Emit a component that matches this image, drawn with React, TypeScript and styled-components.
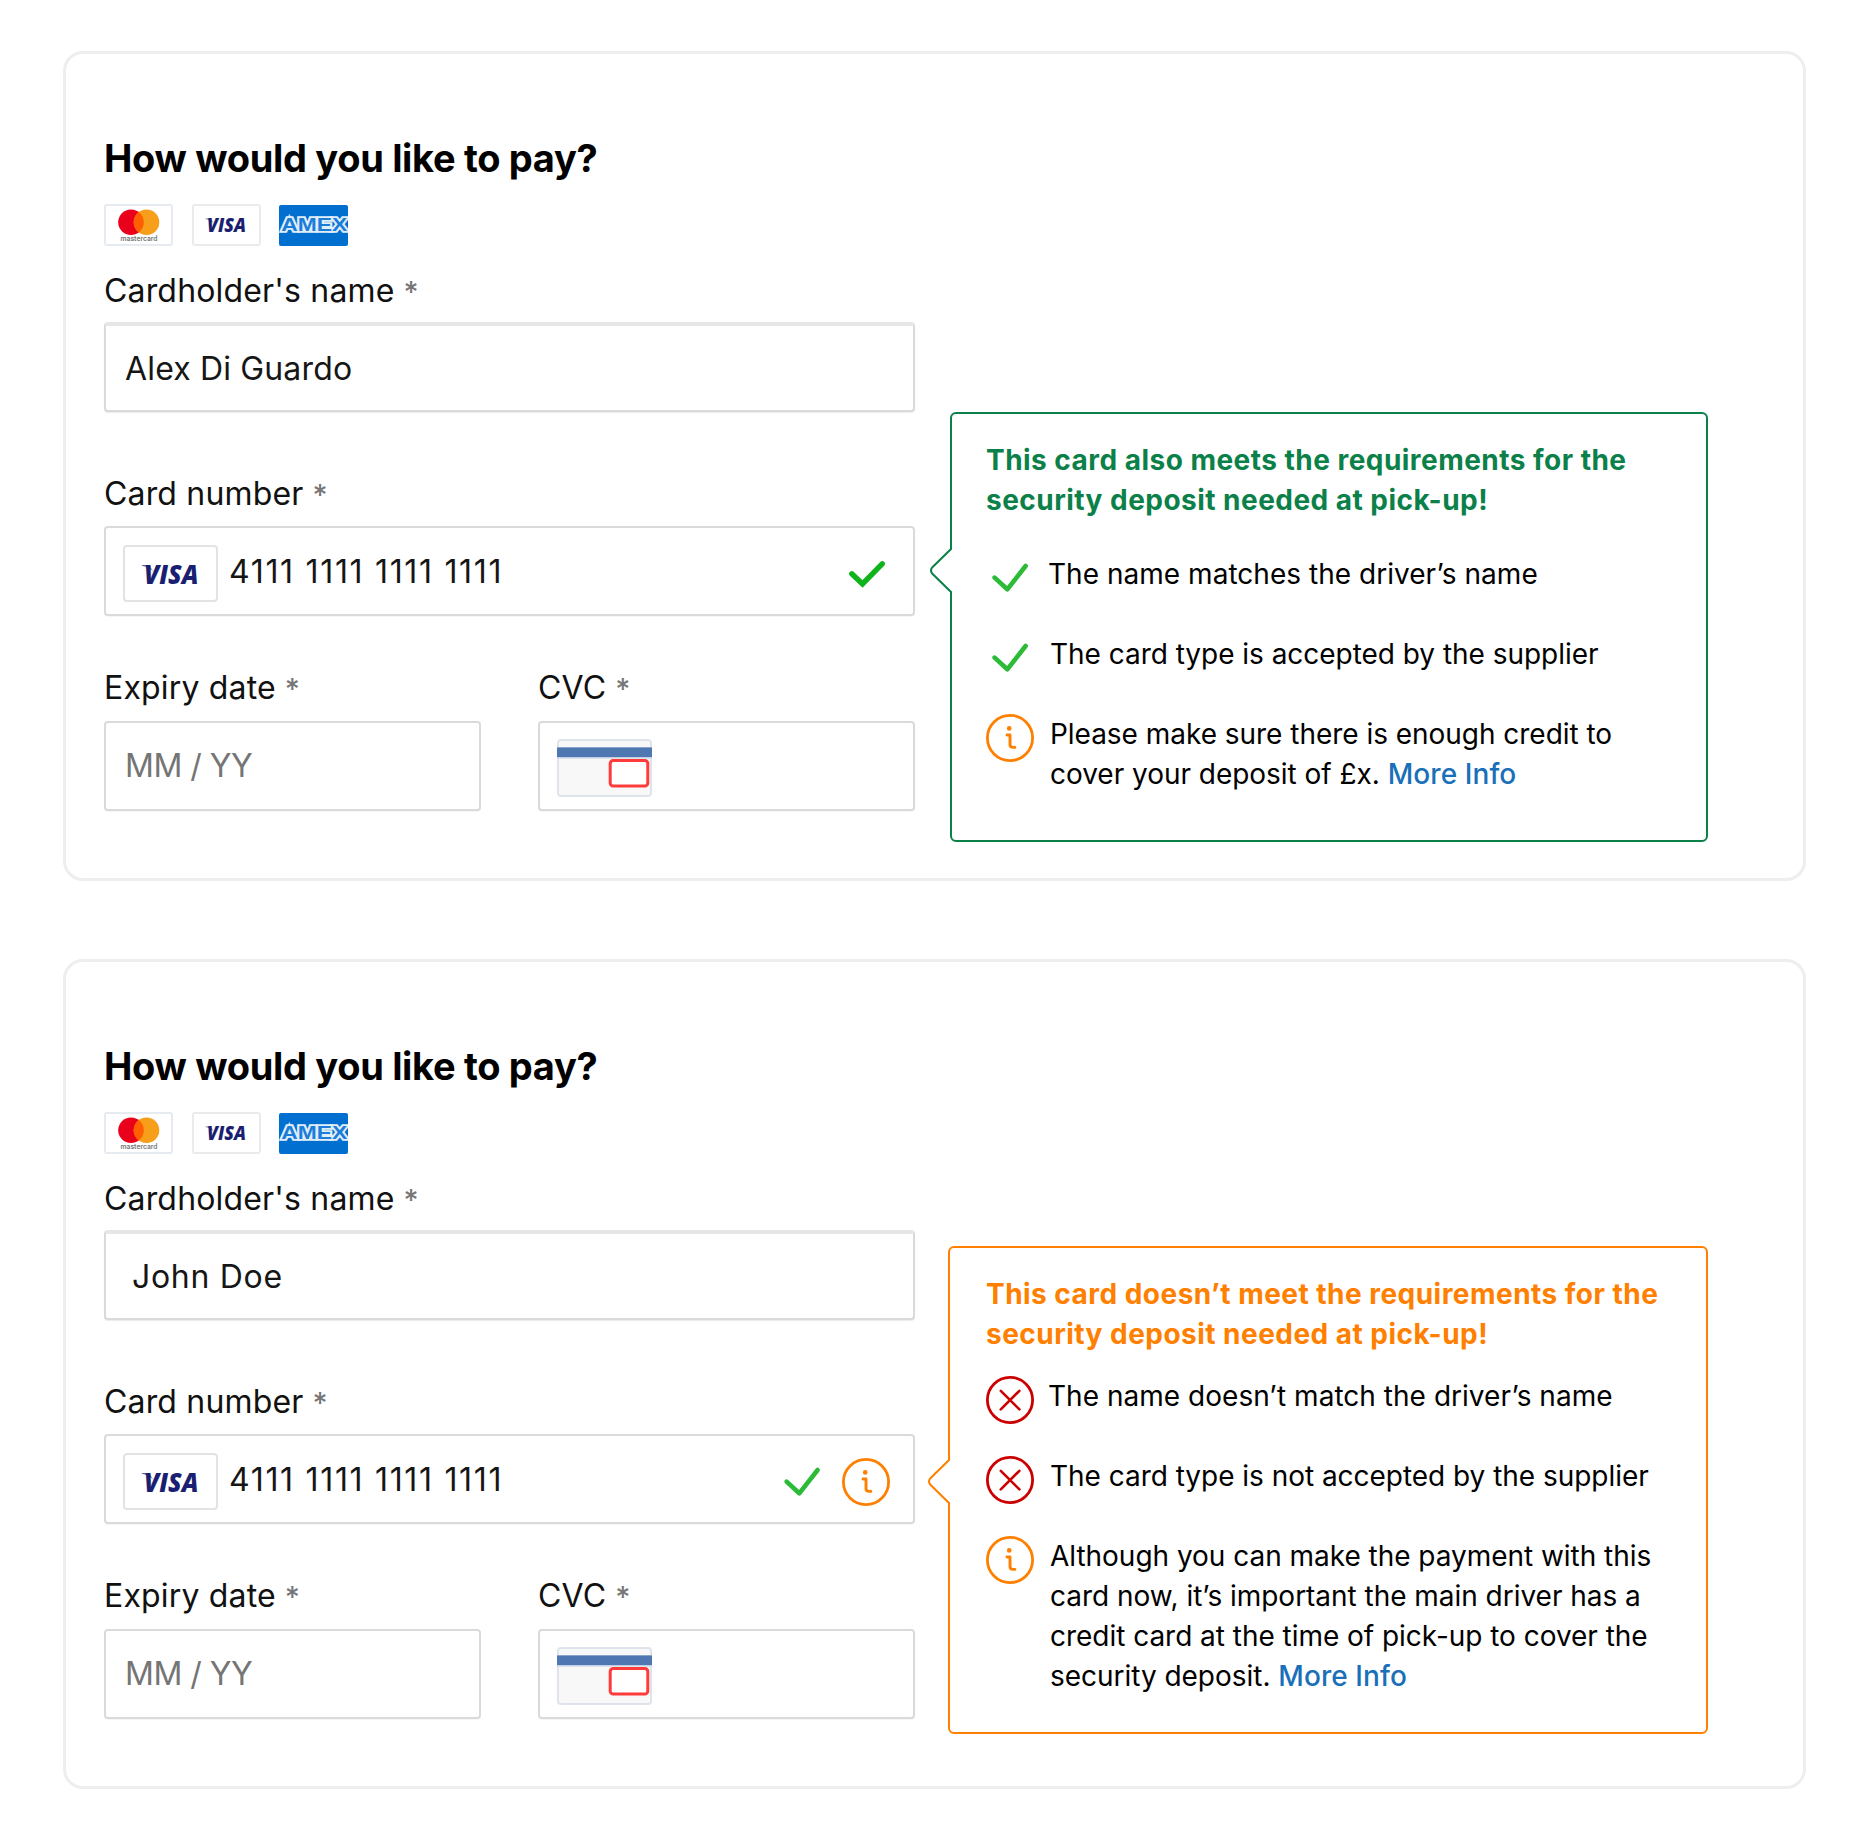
import React from "react";
import styled, { createGlobalStyle } from "styled-components";

const GREEN = "#0b8149";
const ORANGE = "#ff8000";
const RED = "#cc0000";

const GlobalStyle = createGlobalStyle`
  *, *::before, *::after { box-sizing: border-box; }
  body {
    margin: 0;
    background: #fff;
    color: #000;
    font-family: Inter, "Liberation Sans", sans-serif;
  }
`;

const Page = styled.main`
  display: flex;
  flex-direction: column;
  gap: 78px;
  padding: 51px 0 55px 63px;
`;

const Panel = styled.section`
  display: flex;
  align-items: flex-start;
  width: 1743px;
  height: 830px;
  padding-left: 38px;
  border: 3px solid #eeeeee;
  border-radius: 20px;
  background: #fff;
`;

const Form = styled.form`
  display: flex;
  flex-direction: column;
  width: 811px;
  padding-top: 81px;
`;

const Heading = styled.h2`
  margin: 0 0 23px;
  font-size: 38px;
  font-weight: 700;
  line-height: 46px;
  letter-spacing: -0.32px;
`;

const Brands = styled.div`
  display: flex;
  gap: 18.5px;
  height: 43px;
  margin-bottom: 24px;

  svg { display: block; width: 69px; height: 43px; }
`;

const Field = styled.div<{ $after?: number }>`
  display: flex;
  flex-direction: column;
  flex: none;
  margin-bottom: ${(p) => p.$after ?? 0}px;
`;

const FieldPair = styled.div`
  display: grid;
  grid-template-columns: 377px 377px;
  column-gap: 57px;
`;

const Label = styled.label<{ $gap?: number }>`
  height: 40px;
  margin-bottom: ${(p) => p.$gap ?? 12}px;
  font-size: 32px;
  line-height: 40px;
  letter-spacing: 0.17px;
  color: #111;
  white-space: pre;
`;

const Required = styled.span`
  margin-left: 9px;
  font-size: 29px;
  font-weight: 500;
  line-height: 1;
  color: #777;
`;

const InputBox = styled.div<{ $strongTop?: boolean; $padLeft?: number }>`
  display: flex;
  align-items: center;
  height: 90px;
  padding: 0 0 0 ${(p) => p.$padLeft ?? 19}px;
  border: 2px solid #dadada;
  border-top: ${(p) => (p.$strongTop ? "4px solid #e6e6e6" : "2px solid #dadada")};
  border-radius: 4px;
  background: #fff;
  box-shadow: ${(p) => (p.$strongTop ? "0 1px 1px rgba(0, 0, 0, 0.08)" : "0 1px 1px rgba(0, 0, 0, 0.04)")};
`;

const Value = styled.span<{ $tracking?: number; $muted?: boolean }>`
  margin-top: ${(p) => (p.$muted ? 0 : 2)}px;
  font-size: 32px;
  line-height: 40px;
  letter-spacing: ${(p) => p.$tracking ?? 0.15}px;
  color: ${(p) => (p.$muted ? "#757575" : "#161616")};
  white-space: pre;
`;

const CardBadge = styled.span`
  display: flex;
  align-items: center;
  justify-content: center;
  width: 95px;
  height: 57px;
  margin: 5px 11px 0 0;
  border: 2px solid #e3e3e3;
  border-radius: 4px;

  svg { width: 67px; height: 42px; }
`;

const CvcSlot = styled.span`
  margin-top: 3px;

  svg { display: block; }
`;

const Status = styled.span<{ $right: number; $gap?: number }>`
  display: flex;
  align-items: center;
  gap: ${(p) => p.$gap ?? 0}px;
  margin: 5px ${(p) => p.$right}px 0 auto;

  svg { display: block; }
`;

const Callout = styled.aside<{ $tone: string; $top: number; $left: number; $height: number }>`
  position: relative;
  width: ${(p) => 758 - p.$left}px;
  height: ${(p) => p.$height}px;
  margin-top: ${(p) => p.$top}px;
  margin-left: ${(p) => 35 + p.$left}px;
  padding: 26px 0 0 ${(p) => 34 - p.$left}px;
  border: 2px solid ${(p) => p.$tone};
  border-radius: 6px;
  background: #fff;
`;

const Pointer = styled.svg<{ $top: number }>`
  position: absolute;
  left: -22px;
  top: ${(p) => p.$top}px;
  width: 24px;
  height: 46px;
`;

const CalloutTitle = styled.h3<{ $tone: string; $after: number }>`
  margin: 0 0 ${(p) => p.$after}px;
  font-size: 28px;
  font-weight: 700;
  line-height: 40px;
  letter-spacing: 0.47px;
  color: ${(p) => p.$tone};
  white-space: nowrap;
`;

const Checks = styled.ul`
  display: flex;
  flex-direction: column;
  gap: 32px;
  margin: 0;
  padding: 0;
  list-style: none;
`;

const CheckItem = styled.li`
  display: grid;
  grid-template-columns: 48px 1fr;
  column-gap: 16px;
  min-height: 48px;
  letter-spacing: -0.03px;

  svg { display: block; }

  &:first-child { column-gap: 14px; letter-spacing: 0.03px; }
`;

const CheckText = styled.p`
  margin: 0;
  font-size: 28px;
  line-height: 40px;
  white-space: nowrap;
`;

const MoreInfo = styled.a`
  font-weight: 500;
  letter-spacing: 0.08px;
  color: #1a70b8;
  text-decoration: none;
`;

const VisaMark = () => (
  <>
    <text
      x="1.5"
      y="14.2"
      fontFamily="'Open Sans', sans-serif"
      fontSize="19.2"
      fontWeight="800"
      fontStyle="italic"
      fill="#1a1f71"
      textLength="39"
      lengthAdjust="spacingAndGlyphs"
    >
      VISA
    </text>
    <path d="M0 0.5 H5 L8 5 C5.5 2.6 3 1.4 0 1 Z" fill="#1a1f71" opacity="0.7" />
  </>
);

const Mastercard = () => (
  <svg viewBox="0 0 69 43">
    <rect x="1" y="1" width="67" height="40" rx="2" fill="#fff" stroke="#e6ebf1" strokeWidth="2" />
    <circle cx="27" cy="18.2" r="12.8" fill="#eb001b" />
    <circle cx="42.5" cy="18.2" r="12.8" fill="#f79e1b" />
    <path d="M34.75 8 A12.8 12.8 0 0 1 34.75 28.4 A12.8 12.8 0 0 1 34.75 8" fill="#ff5f00" />
    <text
      x="16.5"
      y="37"
      fontFamily="Inter, sans-serif"
      fontSize="7"
      fontWeight="600"
      fill="#777"
      textLength="37"
      lengthAdjust="spacingAndGlyphs"
    >
      mastercard
    </text>
  </svg>
);

const VisaCard = () => (
  <svg viewBox="0 0 69 43">
    <rect x="1" y="1" width="67" height="40" rx="2" fill="#fff" stroke="#ebebee" strokeWidth="2" />
    <g transform="translate(13.5 14)">
      <VisaMark />
    </g>
  </svg>
);

const AmexCard = () => (
  <svg viewBox="0 0 69 43">
    <rect x="0" y="1" width="69" height="41" rx="2" fill="#016fd0" />
    <text
      x="2.2"
      y="26.6"
      fontFamily="'Liberation Sans', sans-serif"
      fontSize="17.5"
      fontWeight="700"
      fill="#1c7dd8"
      stroke="#e0eefa"
      strokeWidth="3.4"
      strokeLinejoin="miter"
      paintOrder="stroke"
      textLength="66"
      lengthAdjust="spacingAndGlyphs"
    >
      AMEX
    </text>
  </svg>
);

const CvcCard = () => (
  <svg width="95" height="58" viewBox="0 0 95 58">
    <rect x="1" y="1" width="93" height="56" rx="3" fill="#f8f8f8" stroke="#dfe4ec" strokeWidth="2" />
    <rect x="0" y="8" width="95" height="11.5" fill="#c3d0e4" />
    <rect x="0" y="8.5" width="95" height="9.5" fill="#4f78b2" />
    <rect x="53.2" y="21.4" width="37.6" height="25.6" rx="3" fill="#fff" stroke="#ff3b3b" strokeWidth="3" />
  </svg>
);

const BoldCheck = () => (
  <svg width="38" height="30" viewBox="0 0 38 30">
    <path d="M3.8 14.8 L14.5 25 L34.2 4.8" fill="none" stroke="#0fb31c" strokeWidth="5.4" strokeLinecap="round" />
  </svg>
);

const Check = () => (
  <svg width="48" height="48" viewBox="0 0 48 48">
    <path d="M8.6 23.6 L21.3 35.3 L39.6 12" fill="none" stroke="#2cbb36" strokeWidth="4.6" strokeLinecap="round" strokeLinejoin="round" />
  </svg>
);

const Info = () => (
  <svg width="48" height="48" viewBox="0 0 48 48">
    <circle cx="24" cy="24" r="22.6" fill="none" stroke={ORANGE} strokeWidth="2.8" />
    <circle cx="23.2" cy="14.4" r="2.3" fill={ORANGE} />
    <path d="M21 21 H24 V30.5 Q24 33.4 27 33.4 H28.9" fill="none" stroke={ORANGE} strokeWidth="2.9" strokeLinecap="round" strokeLinejoin="round" />
  </svg>
);

const Cross = () => (
  <svg width="48" height="48" viewBox="0 0 48 48">
    <circle cx="24" cy="24" r="22.6" fill="none" stroke={RED} strokeWidth="2.8" />
    <path d="M14.8 14.8 L33.4 33.4 M33.4 14.8 L14.8 33.4" stroke={RED} strokeWidth="2.6" strokeLinecap="round" />
  </svg>
);

const CalloutPointer = ({ tone, top }: { tone: string; top: number }) => (
  <Pointer $top={top} viewBox="0 0 24 46">
    <path d="M21 1 L24 1 L24 45 L21 45 Z" fill="#fff" />
    <path d="M21 -1 V1 L2.4 19.2 Q-0.4 22.5 2.4 25.8 L21 44 V47" fill="#fff" stroke={tone} strokeWidth="2" />
  </Pointer>
);

interface PaymentFormProps {
  name: string;
  nameInset: number;
  nameTracking?: number;
  status: React.ReactNode;
}

const PaymentForm = ({ name, nameInset, nameTracking, status }: PaymentFormProps) => (
  <Form>
    <Heading>How would you like to pay?</Heading>
    <Brands>
      <Mastercard />
      <VisaCard />
      <AmexCard />
    </Brands>
    <Field $after={62}>
      <Label $gap={11}>Cardholder's name<Required>*</Required></Label>
      <InputBox $strongTop $padLeft={nameInset}>
        <Value $tracking={nameTracking}>{name}</Value>
      </InputBox>
    </Field>
    <Field $after={52}>
      <Label>Card number<Required>*</Required></Label>
      <InputBox $padLeft={17}>
        <CardBadge>
          <svg viewBox="-3.5 -8 48 30">
            <VisaMark />
          </svg>
        </CardBadge>
        <Value $tracking={1.68}>4111 1111 1111 1111</Value>
        {status}
      </InputBox>
    </Field>
    <FieldPair>
      <Field>
        <Label $gap={13}>Expiry date<Required>*</Required></Label>
        <InputBox>
          <Value $muted $tracking={-0.5}>MM / YY</Value>
        </InputBox>
      </Field>
      <Field>
        <Label $gap={13}>CVC<Required>*</Required></Label>
        <InputBox $padLeft={17}>
          <CvcSlot><CvcCard /></CvcSlot>
        </InputBox>
      </Field>
    </FieldPair>
  </Form>
);

export default function App() {
  return (
    <>
      <GlobalStyle />
      <Page>
        <Panel>
          <PaymentForm
            name="Alex Di Guardo"
            nameInset={19}
            status={<Status $right={27}><BoldCheck /></Status>}
          />
          <Callout $tone={GREEN} $top={358} $left={0} $height={430}>
            <CalloutPointer tone={GREEN} top={134} />
            <CalloutTitle $tone={GREEN} $after={34}>
              This card also meets the requirements for the
              <br />
              security deposit needed at pick-up!
            </CalloutTitle>
            <Checks>
              <CheckItem><Check /><CheckText>The name matches the driver’s name</CheckText></CheckItem>
              <CheckItem><Check /><CheckText>The card type is accepted by the supplier</CheckText></CheckItem>
              <CheckItem>
                <Info />
                <CheckText>
                  Please make sure there is enough credit to
                  <br />
                  cover your deposit of £x. <MoreInfo>More Info</MoreInfo>
                </CheckText>
              </CheckItem>
            </Checks>
          </Callout>
        </Panel>

        <Panel>
          <PaymentForm
            name="John Doe"
            nameInset={26}
            nameTracking={0.7}
            status={<Status $right={23} $gap={16}><Check /><Info /></Status>}
          />
          <Callout $tone={ORANGE} $top={284} $left={-2} $height={488}>
            <CalloutPointer tone={ORANGE} top={211} />
            <CalloutTitle $tone={ORANGE} $after={22}>
              This card doesn’t meet the requirements for the
              <br />
              security deposit needed at pick-up!
            </CalloutTitle>
            <Checks>
              <CheckItem><Cross /><CheckText>The name doesn’t match the driver’s name</CheckText></CheckItem>
              <CheckItem><Cross /><CheckText>The card type is not accepted by the supplier</CheckText></CheckItem>
              <CheckItem>
                <Info />
                <CheckText>
                  Although you can make the payment with this
                  <br />
                  card now, it’s important the main driver has a
                  <br />
                  credit card at the time of pick-up to cover the
                  <br />
                  security deposit. <MoreInfo>More Info</MoreInfo>
                </CheckText>
              </CheckItem>
            </Checks>
          </Callout>
        </Panel>
      </Page>
    </>
  );
}
